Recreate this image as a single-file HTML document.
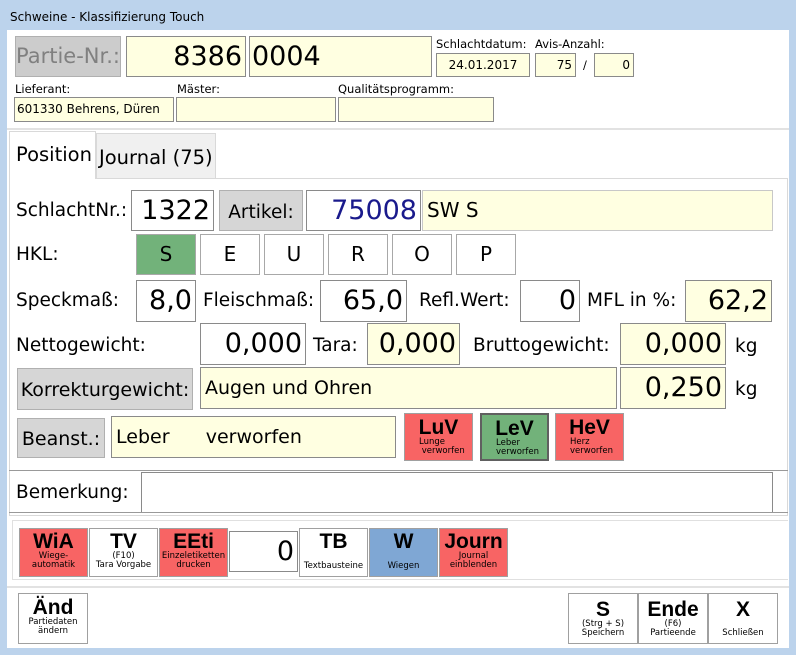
<!DOCTYPE html>
<html><head><meta charset="utf-8"><style>
*{box-sizing:border-box;margin:0;padding:0}
body{width:796px;height:655px;background:#bcd3ec;font-family:"DejaVu Sans","Liberation Sans",sans-serif;position:relative;overflow:hidden;color:#000}
.a{position:absolute}
.y{background:#ffffe1;border:1px solid #8a8a8a}
.w{background:#fff;border:1px solid #8a8a8a}
.g{background:#d6d6d6;border:1px solid #b0b0b0}
.r{text-align:right;padding-right:3px}
.lb{position:absolute;font-size:18.5px;white-space:nowrap}
.sm{position:absolute;font-size:11.5px;white-space:nowrap}
.btn{position:absolute;border:1px solid #a0a0a0;text-align:center;line-height:1}
.btn b{display:block;font-family:"Liberation Sans",sans-serif;font-weight:900;font-size:21px}
.btn span{display:block;font-size:8.5px;line-height:9px}
.red{background:#f86464}
.hk{position:absolute;top:234px;width:60px;height:41px;background:#fff;border:1px solid #a8a8a8;font-size:20px;text-align:center;line-height:39px}
.big{font-size:27px}
</style></head><body>
<div class="a" style="left:10px;top:10px;font-size:12px">Schweine - Klassifizierung Touch</div>
<div class="a" style="left:7px;top:30px;width:782px;height:618px;background:#fff"></div>
<div class="a g" style="left:15px;top:36px;width:106px;height:41px;font-size:21px;color:#808080;line-height:39px;text-align:center;background:#cccccc">Partie-Nr.:</div>
<div class="a y r big" style="left:126px;top:36px;width:120px;height:41px;line-height:39px">8386</div>
<div class="a y big" style="left:249px;top:36px;width:183px;height:41px;line-height:39px;padding-left:2px">0004</div>
<div class="sm" style="left:436px;top:37px">Schlachtdatum:</div>
<div class="sm" style="left:535px;top:37px">Avis-Anzahl:</div>
<div class="a y" style="left:436px;top:53px;width:94px;height:24px;font-size:12px;line-height:22px;text-align:center">24.01.2017</div>
<div class="a y r" style="left:535px;top:53px;width:41px;height:24px;font-size:12px;line-height:22px">75</div>
<div class="sm" style="left:583px;top:58px">/</div>
<div class="a y r" style="left:594px;top:53px;width:40px;height:24px;font-size:12px;line-height:22px">0</div>
<div class="sm" style="left:15px;top:82px">Lieferant:</div>
<div class="sm" style="left:177px;top:82px">Mäster:</div>
<div class="sm" style="left:338px;top:82px">Qualitätsprogramm:</div>
<div class="a y" style="left:14px;top:97px;width:160px;height:25px;font-size:12px;line-height:23px;padding-left:2px">601330 Behrens, Düren</div>
<div class="a y" style="left:176px;top:97px;width:160px;height:25px"></div>
<div class="a y" style="left:338px;top:97px;width:156px;height:25px"></div>
<div class="a" style="left:7px;top:128px;width:782px;height:2px;background:#e2e2e2"></div>
<div class="a" style="left:96px;top:133px;width:120px;height:46px;background:#f0f0f0;border:1px solid #d9d9d9;font-size:19.5px;line-height:48px;padding-left:2px">Journal (75)</div>
<div class="a" style="left:9px;top:131px;width:87px;height:48px;background:#fff;border:1px solid #d9d9d9;border-bottom:none;font-size:19.5px;line-height:46px;padding-left:6px;z-index:2">Position</div>
<div class="a" style="left:9px;top:178px;width:779px;height:338px;border:1px solid #d9d9d9"></div>
<div class="lb" style="left:16px;top:200px">SchlachtNr.:</div>
<div class="a w r big" style="left:131px;top:190px;width:83px;height:41px;line-height:39px">1322</div>
<div class="a g" style="left:219px;top:190px;width:84px;height:41px;font-size:18.5px;line-height:43px;text-align:center">Artikel:</div>
<div class="a w r big" style="left:306px;top:190px;width:115px;height:41px;line-height:39px;color:#1a1a8c">75008</div>
<div class="a y" style="left:422px;top:190px;width:351px;height:41px;font-size:20px;line-height:39px;padding-left:4px;border-color:#c8c8c8">SW S</div>
<div class="lb" style="left:16px;top:244px">HKL:</div>
<div class="hk" style="left:136px;background:#72b27a">S</div>
<div class="hk" style="left:200px">E</div>
<div class="hk" style="left:264px">U</div>
<div class="hk" style="left:328px">R</div>
<div class="hk" style="left:392px">O</div>
<div class="hk" style="left:456px">P</div>
<div class="lb" style="left:16px;top:290px">Speckmaß:</div>
<div class="a w r big" style="left:136px;top:280px;width:60px;height:42px;line-height:40px">8,0</div>
<div class="lb" style="left:203px;top:290px">Fleischmaß:</div>
<div class="a w r big" style="left:320px;top:280px;width:87px;height:42px;line-height:40px">65,0</div>
<div class="lb" style="left:419px;top:290px">Refl.Wert:</div>
<div class="a w r big" style="left:520px;top:280px;width:60px;height:42px;line-height:40px">0</div>
<div class="lb" style="left:587px;top:290px">MFL in %:</div>
<div class="a y r big" style="left:685px;top:280px;width:87px;height:42px;line-height:40px">62,2</div>
<div class="lb" style="left:16px;top:335px">Nettogewicht:</div>
<div class="a w r big" style="left:200px;top:323px;width:106px;height:42px;line-height:40px">0,000</div>
<div class="lb" style="left:313px;top:335px">Tara:</div>
<div class="a y r big" style="left:367px;top:323px;width:93px;height:42px;line-height:40px">0,000</div>
<div class="lb" style="left:473px;top:335px">Bruttogewicht:</div>
<div class="a y r big" style="left:620px;top:323px;width:106px;height:42px;line-height:40px">0,000</div>
<div class="lb" style="left:735px;top:336px">kg</div>
<div class="a g" style="left:17px;top:368px;width:176px;height:42px;font-size:19px;line-height:42px;text-align:center">Korrekturgewicht:</div>
<div class="a y" style="left:200px;top:367px;width:417px;height:42px;font-size:19px;line-height:40px;padding-left:4px">Augen und Ohren</div>
<div class="a y r big" style="left:620px;top:367px;width:106px;height:42px;line-height:40px">0,250</div>
<div class="lb" style="left:735px;top:379px">kg</div>
<div class="a g" style="left:17px;top:418px;width:88px;height:40px;font-size:19px;line-height:40px;text-align:center">Beanst.:</div>
<div class="a y" style="left:111px;top:416px;width:285px;height:42px;font-size:19px;line-height:40px;padding-left:4px;white-space:pre">Leber      verworfen</div>
<div class="btn red" style="left:404px;top:413px;width:69px;height:48px;padding-top:3px"><b>LuV</b><span style="text-align:left;padding-left:14px">Lunge<br>&nbsp;verworfen</span></div>
<div class="btn" style="left:480px;top:413px;width:69px;height:48px;padding-top:3px;background:#72b27a;border:2px solid #606060"><b>LeV</b><span style="text-align:left;padding-left:14px">Leber<br>verworfen</span></div>
<div class="btn red" style="left:555px;top:413px;width:69px;height:48px;padding-top:3px"><b>HeV</b><span style="text-align:left;padding-left:14px">Herz<br>verworfen</span></div>
<div class="a" style="left:9px;top:470px;width:779px;height:1px;background:#999"></div>
<div class="lb" style="left:16px;top:482px">Bemerkung:</div>
<div class="a w" style="left:141px;top:472px;width:632px;height:41px"></div>
<div class="a" style="left:9px;top:512px;width:779px;height:1px;background:#999"></div>
<div class="a" style="left:12px;top:520px;width:776px;height:60px;border:1px solid #e0e0e0;border-right:none"></div>
<div class="btn red" style="left:19px;top:528px;width:69px;height:49px;padding-top:2px"><b>WiA</b><span>Wiege-<br>automatik</span></div>
<div class="btn" style="left:89px;top:528px;width:69px;height:49px;padding-top:2px;background:#fff"><b>TV</b><span>(F10)<br>Tara Vorgabe</span></div>
<div class="btn red" style="left:159px;top:528px;width:69px;height:49px;padding-top:2px"><b>EEti</b><span>Einzeletiketten<br>drucken</span></div>
<div class="a w r big" style="left:229px;top:531px;width:69px;height:41px;line-height:40px">0</div>
<div class="btn" style="left:299px;top:528px;width:69px;height:49px;padding-top:2px;background:#fff"><b>TB</b><span style="margin-top:10px">Textbausteine</span></div>
<div class="btn" style="left:369px;top:528px;width:69px;height:49px;padding-top:2px;background:#7fa7d4"><b>W</b><span style="margin-top:10px">Wiegen</span></div>
<div class="btn red" style="left:439px;top:528px;width:69px;height:49px;padding-top:2px"><b>Journ</b><span>Journal<br>einblenden</span></div>
<div class="a" style="left:7px;top:586px;width:782px;height:2px;background:#e2e2e2"></div>
<div class="btn" style="left:18px;top:593px;width:70px;height:51px;padding-top:3px;background:#fff"><b>Änd</b><span>Partiedaten<br>ändern</span></div>
<div class="btn" style="left:568px;top:593px;width:70px;height:51px;padding-top:5px;background:#fff"><b>S</b><span>(Strg + S)<br>Speichern</span></div>
<div class="btn" style="left:638px;top:593px;width:70px;height:51px;padding-top:5px;background:#fff"><b>Ende</b><span>(F6)<br>Partieende</span></div>
<div class="btn" style="left:708px;top:593px;width:70px;height:51px;padding-top:5px;background:#fff"><b>X</b><span style="margin-top:9px">Schließen</span></div>
</body></html>
